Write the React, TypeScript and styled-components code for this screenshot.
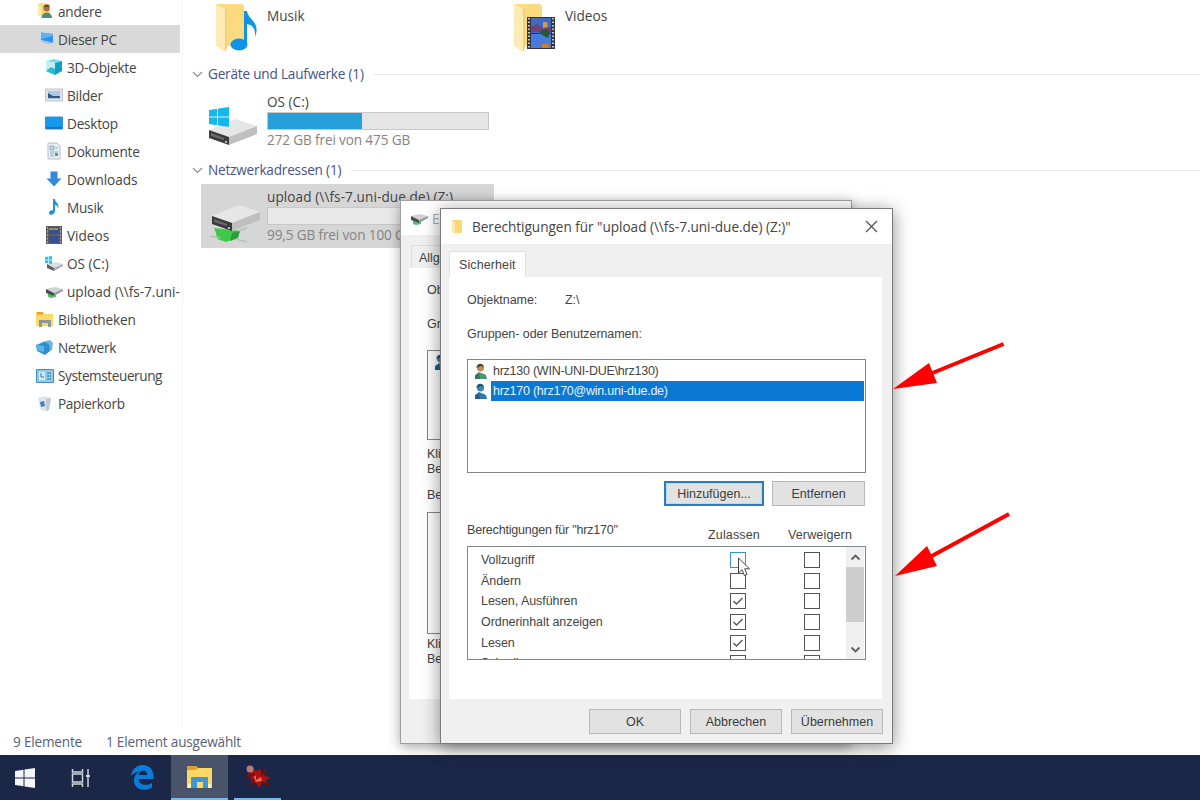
import React from "react";
import styled, { createGlobalStyle } from "styled-components";

const treeItems = [
  { name: "andere", icon: "user", level: 0 },
  { name: "Dieser PC", icon: "pc", level: 0, selected: true },
  { name: "3D-Objekte", icon: "cube", level: 1 },
  { name: "Bilder", icon: "pictures", level: 1 },
  { name: "Desktop", icon: "desktop", level: 1 },
  { name: "Dokumente", icon: "document", level: 1 },
  { name: "Downloads", icon: "download", level: 1, spacing: -0.05 },
  { name: "Musik", icon: "note", level: 1 },
  { name: "Videos", icon: "film", level: 1, spacing: 0 },
  { name: "OS (C:)", icon: "osdrive", level: 1, spacing: 0 },
  { name: "upload (\\\\fs-7.uni-", icon: "netdrive", level: 1, spacing: 0 },
  { name: "Bibliotheken", icon: "library", level: 0, spacing: -0.15 },
  { name: "Netzwerk", icon: "network", level: 0 },
  { name: "Systemsteuerung", icon: "control", level: 0, spacing: -0.42 },
  { name: "Papierkorb", icon: "bin", level: 0, spacing: -0.32 },
];

const permissions = [
  { name: "Vollzugriff", allow: false, hot: true },
  { name: "Ändern", allow: false },
  { name: "Lesen, Ausführen", allow: true },
  { name: "Ordnerinhalt anzeigen", allow: true },
  { name: "Lesen", allow: true },
  { name: "Schreiben", allow: false },
];

const TreeIcon = ({ name }: { name: string }) => {
  switch (name) {
    case "user":
      return (
        <svg width="18" height="18" viewBox="0 0 18 18">
          <path d="M2 2l4-1 8 1v12H4l-2-1z" fill="#f8d775" />
          <path d="M2 2l3 2v11l-3-2z" fill="#fbe9a8" />
          <circle cx="10.500" cy="6.500" r="3" fill="#a9713f" />
          <path d="M7.500 5.500c0-4 6.500-4 6 0-2-1-4-1-6 0z" fill="#5a4a35" />
          <path d="M5.500 16c0-7 10.500-7 10.500 0z" fill="#4c8c7a" />
        </svg>
      );
    case "pc":
      return (
        <svg width="18" height="18" viewBox="0 0 18 18">
          <path d="M5 2.500l12 1.500v9L5 10z" fill="#2b93e8" />
          <path d="M5 2.500l12 1.500v2L5 9z" fill="#58b4f6" />
          <path d="M5 10l12 3-4 1-7-2z" fill="#9fc4df" />
        </svg>
      );
    case "cube":
      return (
        <svg width="18" height="18" viewBox="0 0 18 18">
          <path d="M1 3l8-2 8 2-7 2z" fill="#7fdcec" />
          <path d="M1 3l9 2v12l-9-3z" fill="#c4eef5" />
          <path d="M10 5l7-2v10l-7 4z" fill="#0f9fc0" />
          <path d="M1 13l5-4 4 2v6z" fill="#2bbad5" />
        </svg>
      );
    case "pictures":
      return (
        <svg width="18" height="18" viewBox="0 0 18 18">
          <path d="M.500 3h17v12H.500z" fill="#dfe4e9" stroke="#bfc6cd" />
          <path d="M3 5h12v8H3z" fill="#a9cbe8" />
          <path d="M3 7l5 3 7 0v2H3z" fill="#34597f" />
        </svg>
      );
    case "desktop":
      return (
        <svg width="18" height="18" viewBox="0 0 18 18">
          <path d="M.500 3h17v12H.500z" fill="#1598ee" stroke="#3b8fd0" />
          <path d="M1 13h16v2H1z" fill="#1c74bd" />
        </svg>
      );
    case "document":
      return (
        <svg width="18" height="18" viewBox="0 0 18 18">
          <path d="M3 1h9l3 3v13H3z" fill="#eaf1f5" stroke="#b3bec7" />
          <path d="M5 4h4v4H5zM10 6h3M5 10h8M5 12h4M5 14h4" fill="#bcd5e5" stroke="#8fb2c8" />
          <path d="M10 11h3v3h-3z" fill="#5d8fb3" />
        </svg>
      );
    case "download":
      return (
        <svg width="18" height="18" viewBox="0 0 18 18">
          <path d="M5.500 1.500h7v7h4L9 16.500 1.500 8.500h4z" fill="#3289de" />
        </svg>
      );
    case "note":
      return (
        <svg width="18" height="18" viewBox="0 0 18 18">
          <path d="M8 1h2c0 4 5 4 3 10 0-3-1.500-4-3-4v6c0 4-6 5-6 2 0-2 2-3 4-2.500z" fill="#1c94dc" />
        </svg>
      );
    case "film":
      return (
        <svg width="18" height="18" viewBox="0 0 18 18">
          <path d="M1 0h16v18H1z" fill="#5f5d5a" />
          <path d="M4 1h10v7H4zM4 10h10v7H4z" fill="#3a4e92" />
          <path d="M4 2h9v2H4z" fill="#9a915f" />
          <path d="M2.500 1v16M15.500 1v16" stroke="#a5a5a5" strokeDasharray="2 1.500" />
        </svg>
      );
    case "osdrive":
      return (
        <svg width="18" height="18" viewBox="0 0 18 18">
          <path d="M2 10l9-2 7 2-9 4z" fill="#dcdfe2" />
          <path d="M2 10l7 4v3l-7-3z" fill="#5d6267" />
          <path d="M9 14l9-4v2l-9 5z" fill="#a9adb1" />
          <path d="M0 3l7-1v8l-7-1z" fill="#2fc0ee" />
          <path d="M3.500 2v8M0 6h7" stroke="#e4f7fd" strokeWidth=".7" />
        </svg>
      );
    case "netdrive":
      return (
        <svg width="18" height="18" viewBox="0 0 18 18">
          <path d="M3 12l8 0 0 3-5 1-3-1z" fill="#58bf69" />
          <path d="M1 7l9-2 8 2-9 4z" fill="#d0d3d5" />
          <path d="M1 7l8 4v3l-8-3z" fill="#4a4e50" />
          <path d="M9 11l9-4v2l-9 5z" fill="#969a9c" />
        </svg>
      );
    case "library":
      return (
        <svg width="18" height="18" viewBox="0 0 18 18">
          <path d="M0 1h7l2 2h8v12H0z" fill="#f9d968" />
          <path d="M1 1h6v2.500H1z" fill="#e7a327" />
          <path d="M3 16V9h12v7h-3v-4H6v4z" fill="#8d9a94" />
        </svg>
      );
    case "network":
      return (
        <svg width="18" height="18" viewBox="0 0 18 18">
          <path d="M6 3l8-2 3 3-1 7-6 2z" fill="#6fb6dc" />
          <path d="M0 6l8-3 5 2 1 7-5 4-8-4z" fill="#2c8fcf" />
          <path d="M1 6l7 1v6l-7-2z" fill="#5db5e6" />
        </svg>
      );
    case "control":
      return (
        <svg width="18" height="18" viewBox="0 0 18 18">
          <path d="M.500 2.500h17v13H.500z" fill="#8fcbea" stroke="#4889ad" />
          <path d="M3 5h6v8H3z" fill="#cfeaf7" />
          <path d="M5 6v4h3M11 6h4M11 9h4M11 12h4" stroke="#2e7ba8" fill="none" />
        </svg>
      );
    default:
      return (
        <svg width="18" height="18" viewBox="0 0 18 18">
          <path d="M2 3l7-2 6 2-2 12-5 1-4-2z" fill="#dfe5ea" />
          <path d="M10 4l5-1-2 12-3 1z" fill="#c0c9d2" />
          <path d="M4 7l4-1 1 5-4 1z" fill="#3d83c0" />
        </svg>
      );
  }
};

const FolderIcon = ({ kind }: { kind: "music" | "video" }) => (
  <svg width="46" height="52" viewBox="0 0 46 52">
    <path d="M2 2h26l2 2v40H6z" fill="#fbda80" />
    <path d="M2 2l9 5v43L2 44z" fill="#fdeab4" />
    <path d="M11 7l2 1v38l-2 4z" fill="#f3cf78" />
    {kind === "music" ? (
      <>
        <path d="M31 9h2c1 9 14 11 8 26 1-9-3-12-8-13v20h-3V9z" fill="#0f93e4" />
        <ellipse cx="25" cy="42.500" rx="8.500" ry="6" fill="#0f93e4" />
      </>
    ) : (
      <>
        <path d="M15 15h28v32H15z" fill="#33343c" />
        <path d="M19 16h20v15H19z" fill="#4069c5" />
        <path d="M19 32h20v14H19z" fill="#4a7bdc" />
        <path d="M19 25l6-3 4 3 10 0v5H19z" fill="#773f72" />
        <path d="M31 20l4 0 1 5-5 1z" fill="#d69a3c" />
        <path d="M28 29l7-2 3 4-2 5-6-3z" fill="#245c2e" />
        <path d="M30 42h7v4h-7z" fill="#c48331" />
        <path d="M17 16v30M41 16v30" stroke="#c4c4c6" strokeWidth="2" strokeDasharray="1.500 2" />
      </>
    )}
  </svg>
);

const DriveIcon = ({ network }: { network?: boolean }) => (
  <DriveSvg width="54" height="46" viewBox="0 0 54 46" $top={network ? 9 : 13}>
    {network && (
      <>
        <path d="M6 30l26 3-2 7-12 4-9-3-1-6z" fill="#3fc94c" />
        <path d="M24 35l8-3-2 8-8 3z" fill="#2f9c3c" />
        <path d="M2 38l10 2M28 41l11 3M30 33l9-3" stroke="#b4c2b4" strokeWidth="1.500" />
      </>
    )}
    <g transform={network ? "translate(4 -5)" : "translate(1 2)"}>
      <path d="M0 23l27-11 21 7-28 11z" fill="#e6e6e6" />
      <path d="M0 23l20 7v8L0 31z" fill="#3b3b3d" />
      <path d="M20 30l28-11v8l-28 11z" fill="#bfbfc0" />
      <path d="M2 26l13 5v2L2 29z" fill="#6a6b6d" />
      <circle cx="17" cy="35" r="1" fill="#e9e9e9" />
    </g>
    {!network && (
      <>
        <path d="M1 5l20-3v20L1 19z" fill="#16b7ee" />
        <path d="M9.500 3v18M1 12h20" stroke="#d8f4fd" strokeWidth="1" />
      </>
    )}
  </DriveSvg>
);

const PersonIcon = ({ blue }: { blue?: boolean }) => (
  <svg width="14" height="17" viewBox="0 0 14 17">
    <circle cx="6.500" cy="5" r="3.500" fill={blue ? "#3b87b0" : "#c08a5e"} />
    <path d="M2.500 5C2 0 9-1 10 4L7 3z" fill={blue ? "#1d5576" : "#4d4434"} />
    <path d="M1 16V12l4-3 7 3 1 4z" fill={blue ? "#2e7bab" : "#4b9673"} />
    <path d="M1 13l4-3 1 6H1z" fill={blue ? "#235f8c" : "#3d6f6e"} />
  </svg>
);

const Chevron = () => (
  <svg width="11" height="7" viewBox="0 0 11 7">
    <path d="M1 1l4.500 4.500L10 1" fill="none" stroke="#888" strokeWidth="1.100" />
  </svg>
);

const Arrow = ({ up }: { up?: boolean }) => (
  <svg width="11" height="7" viewBox="0 0 11 7">
    <path d={up ? "M1.500 5.500l4-4 4 4" : "M1.500 1.500l4 4 4-4"} fill="none" stroke="#606060" strokeWidth="1.900" />
  </svg>
);

const App = () => {
  return (
    <Screen>
      <GlobalStyle />
      <Explorer>
        <Tree>
          {treeItems.map((item) => (
            <TreeRow key={item.name} $level={item.level} $selected={item.selected}>
              <TreeIcon name={item.icon} />
              <TreeName $spacing={item.spacing}>{item.name}</TreeName>
            </TreeRow>
          ))}
        </Tree>
        <Content>
          <Folders>
            <Folder>
              <FolderIcon kind="music" />
              <FolderName>Musik</FolderName>
            </Folder>
            <Folder>
              <FolderIcon kind="video" />
              <FolderName>Videos</FolderName>
            </Folder>
          </Folders>
          <GroupHeader>
            <Chevron />
            <GroupName>Geräte und Laufwerke (1)</GroupName>
            <GroupLine />
          </GroupHeader>
          <Drive>
            <DriveIcon />
            <DriveInfo>
              <DriveName>OS (C:)</DriveName>
              <Usage>
                <UsageFill style={{ width: "42.5%" }} />
              </Usage>
              <DriveFree>272 GB frei von 475 GB</DriveFree>
            </DriveInfo>
          </Drive>
          <GroupHeader>
            <Chevron />
            <GroupName>Netzwerkadressen (1)</GroupName>
            <GroupLine />
          </GroupHeader>
          <Drive $selected>
            <DriveIcon network />
            <DriveInfo>
              <DriveName $spacing={0.08}>upload (\\fs-7.uni-due.de) (Z:)</DriveName>
              <Usage $light />
              <DriveFree>99,5 GB frei von 100 GB</DriveFree>
            </DriveInfo>
          </Drive>
        </Content>
      </Explorer>
      <StatusBar>
        <span>9 Elemente</span>
        <span>1 Element ausgewählt</span>
      </StatusBar>

      <BackWindow>
        <BackTitle>
          <TreeIcon name="netdrive" />
          <span>E</span>
        </BackTitle>
        <BackTab>Allg</BackTab>
        <BackPane>
          <BackLabel $height={33}>Ob</BackLabel>
          <BackLabel $height={34}>Gr</BackLabel>
          <BackList $height={90} $top={9}>
            <PersonIcon blue />
          </BackList>
          <BackLabel $height={15} $top={7}>Kli</BackLabel>
          <BackLabel $height={15}>Be</BackLabel>
          <BackLabel $height={36}>Be</BackLabel>
          <BackList $height={122} $top={-1} />
          <BackLabel $height={15} $top={3}>Kli</BackLabel>
          <BackLabel $height={15}>Be</BackLabel>
        </BackPane>
      </BackWindow>

      <Dialog>
        <TitleBar>
          <svg width="12" height="16" viewBox="0 0 12 16">
            <path d="M1 1h9l1 1v12H2z" fill="#fbd874" />
            <path d="M1 1l3 2v12l-3-2z" fill="#fdeaaf" />
          </svg>
          <Title>Berechtigungen für "upload (\\fs-7.uni-due.de) (Z:)"</Title>
          <svg width="13" height="13" viewBox="0 0 13 13">
            <path d="M1 1l11 11M12 1L1 12" stroke="#505050" strokeWidth="1.200" />
          </svg>
        </TitleBar>
        <Tab>Sicherheit</Tab>
        <Pane>
          <ObjectRow>
            <ObjectLabel>Objektname:</ObjectLabel>
            <span>Z:\</span>
          </ObjectRow>
          <GroupsLabel>Gruppen- oder Benutzernamen:</GroupsLabel>
          <UserList>
            <UserRow>
              <PersonIcon />
              <UserName>hrz130 (WIN-UNI-DUE\hrz130)</UserName>
            </UserRow>
            <UserRow>
              <PersonIcon blue />
              <UserName $selected>hrz170 (hrz170@win.uni-due.de)</UserName>
            </UserRow>
          </UserList>
          <ListButtons>
            <Button $width={100} $focused>Hinzufügen...</Button>
            <Button $width={93}>Entfernen</Button>
          </ListButtons>
          <PermHeader>
            <PermTitle>Berechtigungen für "hrz170"</PermTitle>
            <HeadCell>Zulassen</HeadCell>
            <HeadCell>Verweigern</HeadCell>
          </PermHeader>
          <PermBox>
            <PermRows>
              {permissions.map((perm) => (
                <PermRow key={perm.name}>
                  <PermName>{perm.name}</PermName>
                  <Check $hot={perm.hot}>
                    {perm.allow && (
                      <svg width="14" height="14" viewBox="0 0 14 14">
                        <path d="M2.500 7l3 3 6-6" fill="none" stroke="#555" strokeWidth="1.400" />
                      </svg>
                    )}
                  </Check>
                  <Check />
                </PermRow>
              ))}
            </PermRows>
            <ScrollBar>
              <ScrollButton>
                <Arrow up />
              </ScrollButton>
              <ScrollThumb />
              <ScrollButton $last>
                <Arrow />
              </ScrollButton>
            </ScrollBar>
          </PermBox>
        </Pane>
        <Footer>
          <Button $width={92}>OK</Button>
          <Button $width={92}>Abbrechen</Button>
          <Button $width={92}>Übernehmen</Button>
        </Footer>
      </Dialog>

      <Cursor width="14" height="21" viewBox="0 0 14 21">
        <path d="M1.500 1v15l3.500-3.300 2.400 5.800 2.700-1.100-2.400-5.600h4.800z" fill="#fff" stroke="#444" />
      </Cursor>
      <Annotations width="1200" height="800" viewBox="0 0 1200 800">
        <path d="M1003.500 344L930 374M1009 514L930 557" stroke="#f00" strokeWidth="4" />
        <path d="M893 389l36-26 8 20zM895 576l32-30 10 20z" fill="#f00" />
      </Annotations>

      <TaskBar>
        <Task $width={50}>
          <svg width="20" height="20" viewBox="0 0 20 20">
            <path d="M0 3l8.500-1.200v7.700H0zM9.500 1.600L20 0v9.500H9.500zM0 10.500h8.500v7.700L0 17zM9.500 10.500H20V20L9.500 18.400z" fill="#f4f6f9" />
          </svg>
        </Task>
        <Task $width={62}>
          <svg width="20" height="20" viewBox="0 0 20 20" fill="none" stroke="#cfd3dc" strokeWidth="1.500">
            <path d="M1.500 1v3h10V1M1.500 19v-3h10v3M1.500 6h10v8h-10zM17 1v18" />
            <path d="M15 7h4v2h-4z" fill="#cfd3dc" stroke="none" />
          </svg>
        </Task>
        <Task $width={59}>
          <svg width="24" height="25" viewBox="0 0 24 25">
            <path d="M1 11C2 4 7 0 12.500 0 19 0 23.500 4.500 23.500 11v3H8.500c.3 6 8 7.500 13.500 4v4.500C14 27 4 24.500 4 15.500 4 11 6.500 8 10 6.500 6 7 3 8.500 1 11zM8.700 10h8.600c0-6-7.600-5.600-8.600 0z" fill="#0c7cdb" fillRule="evenodd" />
          </svg>
        </Task>
        <Task $width={57} $active>
          <svg width="27" height="24" viewBox="0 0 27 24">
            <path d="M1 1h9l2 2h14v20H1z" fill="#fbd865" />
            <path d="M1 1h9l2 2-2 2H1z" fill="#dfa02c" />
            <path d="M5 23V12h17v11h-5v-6h-6v6z" fill="#3f98d5" />
            <path d="M2 19h3v4H2zM22 19h3v4h-3z" fill="#fff0b1" />
          </svg>
        </Task>
        <TaskGap />
        <Task $width={47} $running>
          <svg width="28" height="26" viewBox="0 0 28 26">
            <path d="M3 4l5-1 4 4 5-2 0 4 5 3 5 2-5 2 1 4-5-1-3 5-3-5-5 0 1-5-6-2 5-3z" fill="#a91112" />
            <path d="M1 14l10-4M17 11l5-6M17 18l8 3M10 16l-3 5" stroke="#750c12" strokeWidth="2" />
            <circle cx="6" cy="5" r="3.500" fill="#b77b79" />
            <path d="M10 13l2-2v5l5-3 1 4-6 1z" fill="#f0694a" />
          </svg>
        </Task>
      </TaskBar>
    </Screen>
  );
};

export default App;

const GlobalStyle = createGlobalStyle`
  body {
    margin: 0;
    background: #fff;
  }
  * {
    box-sizing: border-box;
  }
  svg {
    display: block;
    flex-shrink: 0;
  }
`;

const Screen = styled.div`
  position: relative;
  display: flex;
  flex-direction: column;
  width: 1200px;
  height: 800px;
  overflow: hidden;
  background: #fff;
  color: #444;
  font-family: "Open Sans", "Noto Sans", sans-serif;
  font-size: 13.600px;
  letter-spacing: -0.2px;
  white-space: nowrap;
`;

const Explorer = styled.div`
  display: flex;
  height: 728px;
`;

const Tree = styled.div`
  width: 183px;
  margin-top: -3px;
  padding-right: 2px;
  border-right: 1px solid #f4f4f4;
`;

const TreeRow = styled.div<{ $level: number; $selected?: boolean }>`
  display: flex;
  align-items: center;
  gap: 4px;
  width: 180px;
  height: 28.050px;
  padding-left: ${(p) => (p.$level ? 45 : 36)}px;
  background: ${(p) => (p.$selected ? "#d9d9d9" : "transparent")};
`;

const TreeName = styled.span<{ $spacing?: number }>`
  padding-top: 1px;
  line-height: 20px;
  letter-spacing: ${(p) => p.$spacing ?? -0.22}px;
`;

const Content = styled.div`
  display: flex;
  flex-direction: column;
  flex: 1;
  padding-left: 9px;
`;

const Folders = styled.div`
  display: flex;
  height: 60px;
  padding: 2px 0 0 22px;
`;

const Folder = styled.div`
  display: flex;
  gap: 7px;
  width: 298px;
`;

const FolderName = styled.span`
  margin-top: 4px;
  line-height: 20px;
  letter-spacing: 0;
`;

const GroupHeader = styled.div`
  display: flex;
  align-items: center;
  height: 28px;
  color: #46528a;
`;

const GroupName = styled.span`
  margin: 0 10px 0 5px;
  line-height: 20px;
`;

const GroupLine = styled.div`
  flex: 1;
  height: 1px;
  background: #e8e8e8;
`;

const Drive = styled.div<{ $selected?: boolean }>`
  display: flex;
  align-items: center;
  gap: 5px;
  width: 293px;
  height: ${(p) => (p.$selected ? 64 : 68)}px;
  margin-left: 9px;
  padding: 0 0 ${(p) => (p.$selected ? 0 : 2)}px 7px;
  background: ${(p) => (p.$selected ? "#d6d6d6" : "transparent")};
`;

const DriveSvg = styled.svg<{ $top: number }>`
  margin-top: ${(p) => p.$top}px;
`;

const DriveInfo = styled.div`
  display: flex;
  flex-direction: column;
`;

const DriveName = styled.span<{ $spacing?: number }>`
  line-height: 20px;
  letter-spacing: ${(p) => p.$spacing ?? 0}px;
`;

const Usage = styled.div<{ $light?: boolean }>`
  width: 222px;
  height: 18px;
  background: ${(p) => (p.$light ? "#e8e8e8" : "#e5e5e5")};
  border: 1px solid #c8c8c8;
`;

const UsageFill = styled.div`
  height: 100%;
  background: #269fda;
`;

const DriveFree = styled.span`
  line-height: 20px;
  letter-spacing: -0.14px;
  color: #848484;
`;

const StatusBar = styled.div`
  display: flex;
  align-items: center;
  gap: 24px;
  height: 27px;
  padding: 0 0 1px 13px;
  letter-spacing: -0.2px;
  color: #566279;
`;

const TaskBar = styled.div`
  display: flex;
  height: 45px;
  background: #1b2746;
`;

const Task = styled.div<{ $width: number; $active?: boolean; $running?: boolean }>`
  display: flex;
  align-items: center;
  justify-content: center;
  width: ${(p) => p.$width}px;
  height: 45px;
  background: ${(p) => (p.$active ? "#495369" : "transparent")};
  border-bottom: ${(p) => (p.$active || p.$running ? "2px solid #76b9ed" : "none")};
`;

const TaskGap = styled.div`
  width: 6px;
`;

const WindowFrame = styled.div`
  position: absolute;
  display: flex;
  flex-direction: column;
  background: #f0f0f0;
  font-family: "Liberation Sans", Arial, sans-serif;
  font-size: 12.500px;
  letter-spacing: -0.06px;
`;

const BackWindow = styled(WindowFrame)`
  left: 400px;
  top: 200px;
  width: 452px;
  height: 544px;
  border: 1px solid #a0a0a0;
  box-shadow: 0 3px 12px rgba(0, 0, 0, 0.35);
`;

const BackTitle = styled.div`
  display: flex;
  align-items: center;
  gap: 4px;
  height: 34px;
  padding-left: 9px;
  background: #fff;
  color: #aaa;
  font-family: "Open Sans", sans-serif;
  font-size: 13.600px;
`;

const BackTab = styled.div`
  width: 60px;
  height: 23px;
  margin: 10px 0 0 10px;
  padding-left: 7px;
  border: 1px solid #dcdcdc;
  border-bottom: 0;
  line-height: 24px;
`;

const BackPane = styled.div`
  width: 433px;
  height: 431px;
  margin-left: 8px;
  padding: 6px 18px;
  background: #fff;
`;

const BackLabel = styled.div<{ $height: number; $top?: number }>`
  height: ${(p) => p.$height}px;
  margin-top: ${(p) => p.$top || 0}px;
  line-height: ${(p) => p.$height}px;
`;

const BackList = styled.div<{ $height: number; $top: number }>`
  height: ${(p) => p.$height}px;
  margin-top: ${(p) => p.$top}px;
  padding: 3px 0 0 6px;
  border: 1px solid #828790;
`;

const Dialog = styled(WindowFrame)`
  left: 440px;
  top: 208px;
  width: 453px;
  height: 536px;
  border: 1px solid #7a7a7a;
  box-shadow: 0 3px 17px rgba(0, 0, 0, 0.45);
`;

const TitleBar = styled.div`
  display: flex;
  align-items: center;
  height: 35px;
  padding: 0 14px 0 10px;
  background: #fff;
  font-family: "Open Sans", sans-serif;
  font-size: 13.600px;
`;

const Title = styled.span`
  flex: 1;
  margin-left: 9px;
  letter-spacing: -0.03px;
`;

const Tab = styled.div`
  width: 77px;
  height: 26px;
  margin: 7px 0 0 8px;
  padding-left: 9px;
  background: #fff;
  border: 1px solid #e0e0e0;
  border-bottom: 0;
  line-height: 26px;
  letter-spacing: 0.1px;
`;

const Pane = styled.div`
  width: 433px;
  height: 422px;
  margin-left: 8px;
  padding: 14px 16px 0 18px;
  background: #fff;
`;

const ObjectRow = styled.div`
  display: flex;
  height: 18px;
  line-height: 18px;
`;

const ObjectLabel = styled.span`
  width: 98px;
`;

const GroupsLabel = styled.div`
  margin-top: 16px;
  line-height: 18px;
`;

const UserList = styled.div`
  height: 114px;
  margin-top: 16px;
  padding: 1px 1px 0 6px;
  border: 1px solid #828790;
`;

const UserRow = styled.div`
  display: flex;
  align-items: center;
  gap: 3px;
  height: 20px;
`;

const UserName = styled.span<{ $selected?: boolean }>`
  flex: 1;
  height: 20px;
  padding-left: 2px;
  line-height: 20px;
  letter-spacing: -0.25px;
  background: ${(p) => (p.$selected ? "#0b78d4" : "transparent")};
  color: ${(p) => (p.$selected ? "#e6f3fd" : "inherit")};
`;

const ListButtons = styled.div`
  display: flex;
  justify-content: flex-end;
  gap: 8px;
  margin: 8px 1px 0 0;
`;

const Button = styled.button<{ $width: number; $focused?: boolean }>`
  width: ${(p) => p.$width}px;
  height: 25px;
  padding: 0;
  background: #e2e2e2;
  border: ${(p) => (p.$focused ? "2px solid #2a7db8" : "1px solid #b9b9b9")};
  color: #3c3c3c;
  font-family: inherit;
  font-size: inherit;
  box-shadow: ${(p) => (p.$focused ? "inset 0 0 0 1px #b5dcf5" : "none")};
`;

const PermHeader = styled.div`
  display: flex;
  height: 40px;
  padding-top: 14px;
`;

const PermTitle = styled.span`
  width: 224px;
  line-height: 20px;
  letter-spacing: -0.2px;
`;

const HeadCell = styled.span`
  width: 86px;
  text-align: center;
  line-height: 31px;
  letter-spacing: 0.15px;
`;

const PermBox = styled.div`
  display: flex;
  height: 114px;
  border: 1px solid #828790;
`;

const PermRows = styled.div`
  flex: 1;
  padding-top: 3px;
  overflow: hidden;
`;

const PermRow = styled.div`
  display: flex;
  align-items: center;
  height: 20.600px;
`;

const PermName = styled.span`
  flex-shrink: 0;
  width: 248px;
  padding-left: 13px;
`;

const Check = styled.span<{ $hot?: boolean }>`
  flex-shrink: 0;
  width: 16px;
  height: 16px;
  margin: 0 44px 0 14px;
  background: #fff;
  border: 1px solid ${(p) => (p.$hot ? "#3c94bb" : "#555")};
`;

const ScrollBar = styled.div`
  display: flex;
  flex-direction: column;
  width: 18px;
  margin-right: 1px;
  background: #f0f0f0;
`;

const ScrollButton = styled.div<{ $last?: boolean }>`
  display: flex;
  align-items: center;
  justify-content: center;
  height: 20px;
  margin-top: ${(p) => (p.$last ? "auto" : 0)};
`;

const ScrollThumb = styled.div`
  height: 55px;
  background: #cdcdcd;
`;

const Footer = styled.div`
  display: flex;
  justify-content: flex-end;
  gap: 9px;
  padding: 10px 9px 0 0;
`;

const Cursor = styled.svg`
  position: absolute;
  left: 737px;
  top: 557px;
`;

const Annotations = styled.svg`
  position: absolute;
  left: 0;
  top: 0;
`;
